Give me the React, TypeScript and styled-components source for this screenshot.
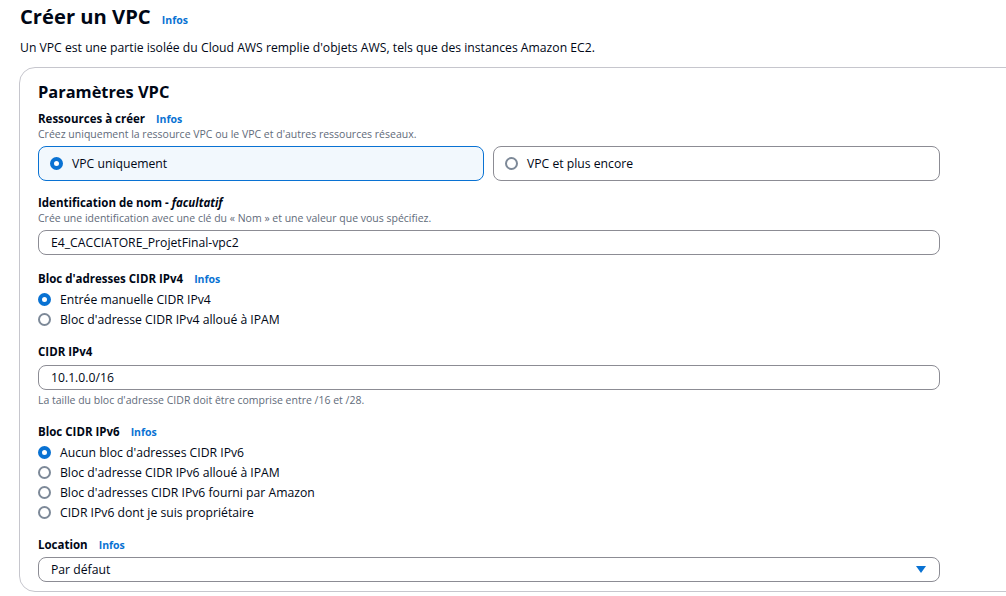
import React from "react";
import styled, { createGlobalStyle } from "styled-components";

const Global = createGlobalStyle`
  html, body { margin: 0; padding: 0; background: #ffffff; }
  body { font-family: "Open Sans", "Noto Sans", Arial, sans-serif; color: #000716; overflow: hidden; }
  * { box-sizing: border-box; }
`;

const Page = styled.div`
  width: 1006px;
  height: 596px;
  overflow: hidden;
  padding: 0 0 0 19px;
`;

const HeaderRow = styled.div`
  display: flex;
  align-items: baseline;
  gap: 11px;
  padding: 0 0 0 1px;
  height: 34px;
`;

const Title = styled.h1`
  margin: 0;
  font-size: 20.2px;
  font-weight: 700;
  line-height: 32px;
`;

const InfoLink = styled.a`
  font-size: 10.5px;
  font-weight: 700;
  color: #0972d3;
  text-decoration: none;
`;

const Description = styled.p`
  margin: 5px 0 0 1px;
  font-size: 12.2px;
  line-height: 18px;
`;

const Card = styled.section`
  margin-top: 10px;
  width: 1100px;
  border: 1px solid #c6c6cd;
  border-radius: 16px;
  padding: 11px 0 9px 18px;
`;

const Inner = styled.div`
  width: 902px;
  display: flex;
  flex-direction: column;
`;

const CardTitle = styled.h2`
  margin: 0;
  font-size: 16.4px;
  font-weight: 700;
  line-height: 26px;
`;

const Field = styled.div<{ $mt?: number }>`
  display: flex;
  flex-direction: column;
  margin-top: ${(p) => p.$mt ?? 0}px;
`;

const LabelRow = styled.div`
  display: flex;
  align-items: baseline;
  gap: 11px;
  height: 17px;
`;

const Label = styled.span`
  font-size: 11.5px;
  font-weight: 700;
  line-height: 17px;
  em { font-style: italic; }
`;

const Help = styled.span`
  font-size: 10.5px;
  line-height: 14px;
  color: #5f6b7a;
`;

const Tiles = styled.div`
  display: grid;
  grid-template-columns: 446px 447px;
  gap: 9px;
  margin-top: 5px;
`;

const Tile = styled.label<{ $checked?: boolean }>`
  display: flex;
  align-items: center;
  gap: 9px;
  height: 35px;
  padding: 0 11px;
  border-radius: 8px;
  border: 1px solid ${(p) => (p.$checked ? "#0972d3" : "#8c8c94")};
  background: ${(p) => (p.$checked ? "#f2f8fd" : "#ffffff")};
  font-size: 12.2px;
`;

const Radio = styled.span<{ $checked?: boolean }>`
  flex: none;
  width: 13px;
  height: 13px;
  border-radius: 50%;
  border: ${(p) => (p.$checked ? "4px solid #0972d3" : "2px solid #7d8998")};
  background: #ffffff;
`;

const RadioList = styled.div`
  display: flex;
  flex-direction: column;
  margin-top: 2px;
`;

const RadioItem = styled.label`
  display: flex;
  align-items: center;
  gap: 9px;
  height: 20px;
  font-size: 12.2px;
`;

const Input = styled.div<{ $mt?: number }>`
  display: flex;
  align-items: center;
  height: 25px;
  margin-top: ${(p) => p.$mt ?? 5}px;
  border: 1px solid #8c8c94;
  border-radius: 8px;
  padding: 0 12px;
  font-size: 12.2px;
  position: relative;
`;

const Caret = styled.span`
  position: absolute;
  right: 13px;
  top: 8px;
  width: 0;
  height: 0;
  border-left: 5px solid transparent;
  border-right: 5px solid transparent;
  border-top: 7px solid #0972d3;
`;

const Constraint = styled(Help)`
  margin-top: 3px;
`;

export default function App() {
  return (
    <Page>
      <Global />
      <HeaderRow>
        <Title>Créer un VPC</Title>
        <InfoLink>Infos</InfoLink>
      </HeaderRow>
      <Description>
        Un VPC est une partie isolée du Cloud AWS remplie d'objets AWS, tels que des instances Amazon EC2.
      </Description>
      <Card>
        <Inner>
          <CardTitle>Paramètres VPC</CardTitle>
          <Field $mt={5}>
            <LabelRow>
              <Label>Ressources à créer</Label>
              <InfoLink>Infos</InfoLink>
            </LabelRow>
            <Help>Créez uniquement la ressource VPC ou le VPC et d'autres ressources réseaux.</Help>
            <Tiles>
              <Tile $checked>
                <Radio $checked />
                VPC uniquement
              </Tile>
              <Tile>
                <Radio />
                VPC et plus encore
              </Tile>
            </Tiles>
          </Field>
          <Field $mt={13}>
            <LabelRow>
              <Label>
                Identification de nom - <em>facultatif</em>
              </Label>
            </LabelRow>
            <Help>Crée une identification avec une clé du « Nom » et une valeur que vous spécifiez.</Help>
            <Input>E4_CACCIATORE_ProjetFinal-vpc2</Input>
          </Field>
          <Field $mt={15}>
            <LabelRow>
              <Label>Bloc d'adresses CIDR IPv4</Label>
              <InfoLink>Infos</InfoLink>
            </LabelRow>
            <RadioList>
              <RadioItem>
                <Radio $checked />
                Entrée manuelle CIDR IPv4
              </RadioItem>
              <RadioItem>
                <Radio />
                Bloc d'adresse CIDR IPv4 alloué à IPAM
              </RadioItem>
            </RadioList>
          </Field>
          <Field $mt={14}>
            <LabelRow>
              <Label>CIDR IPv4</Label>
            </LabelRow>
            <Input>10.1.0.0/16</Input>
            <Constraint>La taille du bloc d'adresse CIDR doit être comprise entre /16 et /28.</Constraint>
          </Field>
          <Field $mt={16}>
            <LabelRow>
              <Label>Bloc CIDR IPv6</Label>
              <InfoLink>Infos</InfoLink>
            </LabelRow>
            <RadioList>
              <RadioItem>
                <Radio $checked />
                Aucun bloc d'adresses CIDR IPv6
              </RadioItem>
              <RadioItem>
                <Radio />
                Bloc d'adresse CIDR IPv6 alloué à IPAM
              </RadioItem>
              <RadioItem>
                <Radio />
                Bloc d'adresses CIDR IPv6 fourni par Amazon
              </RadioItem>
              <RadioItem>
                <Radio />
                CIDR IPv6 dont je suis propriétaire
              </RadioItem>
            </RadioList>
          </Field>
          <Field $mt={14}>
            <LabelRow>
              <Label>Location</Label>
              <InfoLink>Infos</InfoLink>
            </LabelRow>
            <Input $mt={4}>
              Par défaut
              <Caret />
            </Input>
          </Field>
        </Inner>
      </Card>
    </Page>
  );
}
